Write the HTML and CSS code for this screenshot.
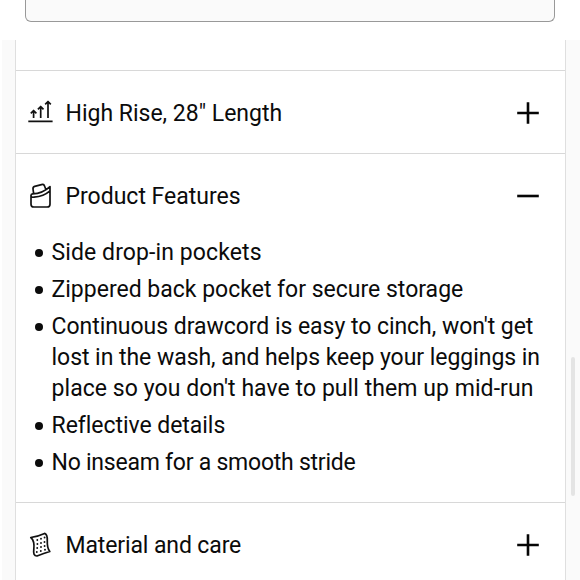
FILE: index.html
```
<!DOCTYPE html>
<html lang="en">
<head>
<meta charset="utf-8">
<title>Product details</title>
<link rel="stylesheet" href="styles.css">
</head>
<body>
<header class="top"><div class="field"></div></header>
<main class="page">
  <div class="panel">
    <section class="previous"></section>
    <section class="item">
      <h2 class="heading">
        <svg class="icon" viewBox="0 0 28 28" aria-hidden="true"><path d="M1.3 22.4H25.6M6.6 19V11.6M3.8 14.3L6.6 11.5l2.8 2.8M13.7 19V7.6M10.9 10.3l2.8-2.8 2.8 2.8M21 19V2.6M18.2 5.3L21 2.5l2.8 2.8"/></svg>
        <span class="title t-rise">High Rise, 28" Length</span>
        <svg class="toggle" viewBox="0 0 24 24" aria-hidden="true"><path d="M1.2 12H22.8M12 1.2V22.8"/></svg>
      </h2>
    </section>
    <section class="item open">
      <h2 class="heading">
        <svg class="icon" viewBox="0 0 28 28" aria-hidden="true"><path d="M4 13V22.2q0 2.8 2.8 2.8H20.2q2.8 0 2.8-2.8V4.6Q15.5 11.6 5.6 11.8Q4 12 4 13.6Q4.2 15.6 7 15.2Q16.8 14.2 23 8.8M6.6 11.4L6 7q-.2-2 1.7-2.6L14.5 2.6q2-.5 2.8.9l1.5 3.8"/></svg>
        <span class="title t-features">Product Features</span>
        <svg class="toggle" viewBox="0 0 24 24" aria-hidden="true"><path d="M1.2 12H22.8"/></svg>
      </h2>
      <ul class="list">
        <li><span class="l1">Side drop-in pockets</span></li>
        <li><span class="l2">Zippered back pocket for secure storage</span></li>
        <li><span class="l3">Continuous drawcord is easy to cinch, won't get</span><br><span class="l4">lost in the wash, and helps keep your leggings in</span><br><span class="l5">place so you don't have to pull them up mid-run</span></li>
        <li><span class="l6">Reflective details</span></li>
        <li><span class="l7">No inseam for a smooth stride</span></li>
      </ul>
    </section>
    <section class="item">
      <h2 class="heading">
        <svg class="icon" viewBox="0 0 28 28" aria-hidden="true"><path d="M3.8 6.5Q12 5 17.6 2.4Q20.6 3.4 20.3 10Q20 17 22.8 20.5Q17 22.2 10 25Q5.8 25.2 6.8 18.5Q7.8 9.8 3.8 6.5Z"/><path class="dots" d="M10.3 9h0M14 7.8h0M17.6 6.5h0M10.4 13h0M14 12h0M17.5 11h0M10.2 17h0M14 16h0M17.6 15h0M9.8 21h0M13.8 20h0M18 18.8h0"/></svg>
        <span class="title t-material">Material and care</span>
        <svg class="toggle" viewBox="0 0 24 24" aria-hidden="true"><path d="M1.2 12H22.8M12 1.2V22.8"/></svg>
      </h2>
    </section>
  </div>
  <div class="scrollbar"></div>
</main>
</body>
</html>
```
FILE: styles.css
```
* { box-sizing: border-box; }
body {
  margin: 0;
  width: 580px;
  height: 580px;
  overflow: hidden;
  background: #fff;
  color: #0b0b0b;
  font-family: Roboto, "Liberation Sans", sans-serif;
}
.top { height: 40px; padding: 0 25px; }
.field {
  height: 22px;
  border: 1px solid #999;
  border-top: 0;
  border-radius: 0 0 6px 6px;
  background: #fafafa;
}
.page {
  position: relative;
  height: 540px;
  margin-left: 2px;
  padding: 0 14px 0 13px;
  background: #fafafa;
  overflow: hidden;
}
.panel {
  height: 540px;
  background: #fff;
  border: solid #dfdfdf;
  border-width: 0 1px;
}
.previous { height: 30px; }
.item { border-top: 1px solid #d8d8d8; height: 83px; }
.item.open { height: 349px; }
.heading {
  display: flex;
  align-items: center;
  height: 84px;
  margin: 0;
  padding: 0 25px 0 11px;
  font-size: 23px;
  font-weight: 400;
}
.icon {
  width: 28px;
  height: 28px;
  margin-right: 10.5px;
  fill: none;
  stroke: #111;
  stroke-width: 1.7;
  stroke-linejoin: round;
}
.icon .dots { stroke-width: 1.9; stroke-linecap: round; }
.title { flex: 1; white-space: nowrap; }
.t-material { letter-spacing: -0.12px; }
.toggle {
  width: 24px;
  height: 24px;
  margin-bottom: 1px;
  fill: none;
  stroke: #050505;
  stroke-width: 2.6;
}
.list { margin: -1px 0 0; padding: 0 0 0 35.5px; list-style: none; font-size: 23px; line-height: 31px; white-space: nowrap; }
.list li { position: relative; margin-bottom: 6px; }
.list li::before {
  content: "";
  position: absolute;
  left: -16.5px;
  top: 12px;
  width: 8px;
  height: 8px;
  border-radius: 50%;
  background: #0b0b0b;
}
.l1 { letter-spacing: 0.1px; }
.l3, .l4 { letter-spacing: -0.04px; }
.l5 { letter-spacing: 0.06px; }
.l6 { letter-spacing: -0.04px; }
.l7 { letter-spacing: -0.24px; }
.scrollbar {
  position: absolute;
  left: 569px;
  top: 317px;
  width: 4px;
  height: 139px;
  border-radius: 2px;
  background: #e4e4e4;
}
```
